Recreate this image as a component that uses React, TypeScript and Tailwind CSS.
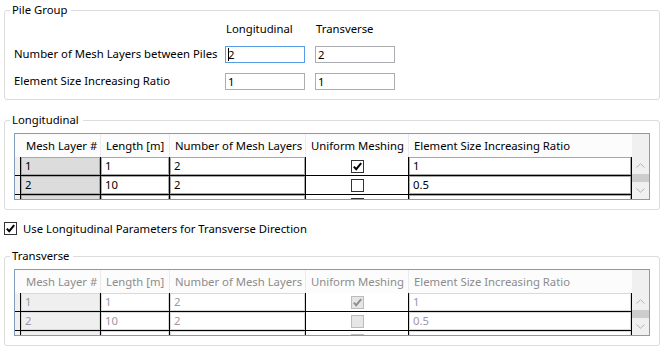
import type { ReactNode } from 'react';

type MeshRow = {
  layer: string;
  length: string;
  layers: string;
  uniform: boolean;
  ratio: string;
};

const ROWS: MeshRow[] = [
  { layer: '1', length: '1', layers: '2', uniform: true, ratio: '1' },
  { layer: '2', length: '10', layers: '2', uniform: false, ratio: '0.5' },
  { layer: '', length: '', layers: '', uniform: false, ratio: '' },
];

function GroupBox({ title, children }: { title: string; children: ReactNode }) {
  return (
    <fieldset className="w-[656px] rounded-[3px] border border-[#dcdcdc] px-[9px] pb-[9px]">
      <legend className="-ml-[4px] pl-[2px] pr-[4px] leading-[16px]">{title}</legend>
      {children}
    </fieldset>
  );
}

function CheckBox({ checked, disabled }: { checked: boolean; disabled?: boolean }) {
  return (
    <span
      className={
        disabled
          ? 'inline-flex h-[13px] w-[13px] shrink-0 items-center justify-center border border-[#bcbcbc] bg-[#e6e6e6]'
          : 'inline-flex h-[13px] w-[13px] shrink-0 items-center justify-center border border-[#333333] bg-white'
      }
    >
      {checked ? (
        <svg width="11" height="11" viewBox="0 0 11 11" aria-hidden="true">
          <polyline
            points="1.8,5.6 4.2,8.2 9.2,2.2"
            fill="none"
            stroke={disabled ? '#8f8f8f' : '#000000'}
            strokeWidth="2"
          />
        </svg>
      ) : null}
    </span>
  );
}

function TextCell({ value, shade, disabled }: { value: string; shade?: boolean; disabled?: boolean }) {
  let box = 'h-[18px] border border-[#a8a8a8] bg-white pl-[3px] leading-[16px]';
  if (shade) box = 'h-[18px] border border-[#a8a8a8] bg-[#dcdcdc] pl-[3px] leading-[16px]';
  if (disabled) box = 'h-[18px] border border-[#d9d9d9] bg-white pl-[3px] leading-[16px] text-[#a096a6]';
  if (disabled && shade) box = 'h-[18px] border border-[#d9d9d9] bg-[#efefef] pl-[3px] leading-[16px] text-[#a096a6]';
  return <div className={box}>{value}</div>;
}

function Chevron({ up }: { up?: boolean }) {
  return (
    <svg width="9" height="5" viewBox="0 0 9 5" aria-hidden="true">
      <polyline
        points={up ? '0.5,4.5 4.5,0.8 8.5,4.5' : '0.5,0.5 4.5,4.2 8.5,0.5'}
        fill="none"
        stroke="#b4b4b4"
        strokeWidth="1"
      />
    </svg>
  );
}

function MeshTable({ disabled }: { disabled?: boolean }) {
  const head = disabled ? 'text-[#8c8c8c]' : 'text-black';
  return (
    <div className="mt-[5px] flex h-[67px] w-[636px] overflow-hidden border border-[#7f9db9]">
      <div className="flex flex-1 flex-col">
        <div className={`flex h-[23px] shrink-0 items-center bg-[#fcfcfc] leading-[16px] ${head}`}>
          <div className="h-full w-[6px]" />
          <div className="flex h-full w-[80px] items-center border-r border-[#ebebeb] pl-[5px]">Mesh Layer #</div>
          <div className="flex h-full w-[69px] items-center border-r border-[#ebebeb] pl-[5px]">Length [m]</div>
          <div className="flex h-full w-[136px] items-center border-r border-[#ebebeb] pl-[5px]">Number of Mesh Layers</div>
          <div className="flex h-full w-[103px] items-center border-r border-[#ebebeb] pl-[5px]">Uniform Meshing</div>
          <div className="flex h-full w-[223px] items-center pl-[5px]">Element Size Increasing Ratio</div>
        </div>
        {ROWS.map((r, i) => (
          <div key={i} className="flex h-[19px] shrink-0 border-b border-black">
            <div className="w-[6px] border-r border-black bg-[#f0f0f0]" />
            <div className="w-[80px] border-r border-black">
              <TextCell value={r.layer} shade disabled={disabled} />
            </div>
            <div className="w-[69px] border-r border-black">
              <TextCell value={r.length} disabled={disabled} />
            </div>
            <div className="w-[136px] border-r border-black">
              <TextCell value={r.layers} disabled={disabled} />
            </div>
            <div className="flex w-[103px] items-center justify-center border-r border-black">
              <CheckBox checked={r.uniform} disabled={disabled} />
            </div>
            <div className="w-[223px] border-r border-black">
              <TextCell value={r.ratio} disabled={disabled} />
            </div>
          </div>
        ))}
      </div>
      <div className="flex w-[17px] flex-col bg-[#f0f0f0]">
        <div className="h-[23px]" />
        <div className="flex h-[17px] items-center justify-center">
          <Chevron up />
        </div>
        <div className="h-[8px] bg-[#cdcdcd]" />
        <div className="flex h-[17px] items-center justify-center">
          <Chevron />
        </div>
      </div>
    </div>
  );
}

function Field({ value, focused }: { value: string; focused?: boolean }) {
  return (
    <div
      className={
        focused
          ? 'flex h-[17px] w-[80px] items-center border border-[#569de5] pl-[2px] leading-[15px]'
          : 'flex h-[17px] w-[80px] items-center border border-[#abadb3] pl-[2px] leading-[15px]'
      }
    >
      {focused ? <span className="-mr-px inline-block h-[13px] w-px bg-black" /> : null}
      {value}
    </div>
  );
}

export default function App() {
  return (
    <div className="h-[350px] w-[665px] overflow-hidden whitespace-nowrap bg-white pl-[4px] pt-[2px] font-['Noto_Sans',sans-serif] text-[11.3px] text-black">
      <GroupBox title="Pile Group">
        <div className="mt-[3px] grid grid-cols-[211px_90px_80px] leading-[16px]">
          <div />
          <div className="pl-px">Longitudinal</div>
          <div className="pl-px">Transverse</div>
        </div>
        <div className="mt-[9px] grid grid-cols-[211px_90px_80px] items-center">
          <div>Number of Mesh Layers between Piles</div>
          <Field value="2" focused />
          <Field value="2" />
        </div>
        <div className="mt-[10px] grid grid-cols-[211px_90px_80px] items-center">
          <div>Element Size Increasing Ratio</div>
          <Field value="1" />
          <Field value="1" />
        </div>
      </GroupBox>

      <div className="mt-[12px]">
        <GroupBox title="Longitudinal">
          <MeshTable />
        </GroupBox>
      </div>

      <label className="mt-[12px] flex h-[13px] items-center gap-[6px] leading-[16px]">
        <CheckBox checked />
        <span>Use Longitudinal Parameters for Transverse Direction</span>
      </label>

      <div className="mt-[13px]">
        <GroupBox title="Transverse">
          <MeshTable disabled />
        </GroupBox>
      </div>
    </div>
  );
}
